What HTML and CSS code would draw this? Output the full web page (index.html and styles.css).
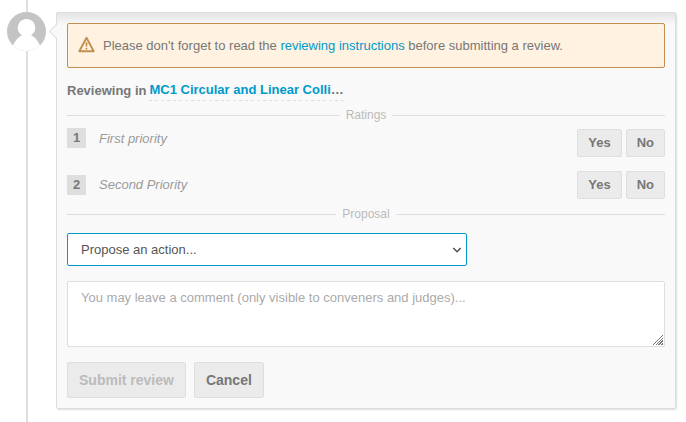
FILE: index.html
```html
<!DOCTYPE html>
<html lang="en">
<head>
<meta charset="utf-8">
<title>Review</title>
<link rel="stylesheet" href="styles.css">
</head>
<body>
<main class="timeline">
  <div class="avatar">
    <svg viewBox="0 0 39 39" aria-hidden="true">
      <defs><clipPath id="disc"><circle cx="19.5" cy="19.5" r="19.5"/></clipPath></defs>
      <g clip-path="url(#disc)">
        <rect width="39" height="39" fill="#c4c4c4"/>
        <path d="M4 39 L6 33.500 C8.500 28 11.500 24.500 15 23.200 C12.200 21.600 10.800 19.200 10.800 16 C10.800 10.800 14.500 7 19.500 7 C24.500 7 28.200 10.800 28.200 16 C28.200 19.200 26.800 21.600 24 23.200 C27.500 24.500 30.500 28 33 33.500 L35 39 Z" fill="#fff"/>
      </g>
    </svg>
  </div>
  <form class="panel">
    <div class="warning">
      <svg class="warning-icon" viewBox="0 0 17 17" aria-hidden="true">
        <path d="M8.500 1.800 L15.700 15.200 H1.300 Z" fill="none" stroke="#c28f50" stroke-width="1.900" stroke-linejoin="round"/>
        <path d="M8.500 6.300 V10.600 M8.500 11.800 V13.400" stroke="#c28f50" stroke-width="1.700"/>
      </svg>
      <p>Please don't forget to read the <a href="#instructions">reviewing instructions</a> before submitting a review.</p>
    </div>
    <div class="track"><span class="track-label">Reviewing in</span> <span class="track-name"><a href="#track">MC1 Circular and Linear Colli</a>…</span></div>
    <div class="titled-rule">Ratings</div>
    <div class="ratings">
      <div class="rating rating-first">
        <span class="number">1</span><span class="question">First priority</span>
        <div class="answers"><button type="button">Yes</button><button type="button">No</button></div>
      </div>
      <div class="rating">
        <span class="number">2</span><span class="question">Second Priority</span>
        <div class="answers"><button type="button">Yes</button><button type="button">No</button></div>
      </div>
    </div>
    <div class="titled-rule">Proposal</div>
    <div class="select-box">
      <select aria-label="Proposed action"><option>Propose an action...</option></select>
      <svg viewBox="0 0 10 6" aria-hidden="true"><path d="M1.300 1 L5 4.700 L8.700 1" fill="none" stroke="#555" stroke-width="1.600"/></svg>
    </div>
    <textarea aria-label="Comment" placeholder="You may leave a comment (only visible to conveners and judges)..."></textarea>
    <div class="actions">
      <button type="submit" disabled>Submit review</button>
      <button type="button">Cancel</button>
    </div>
  </form>
</main>
</body>
</html>
```
FILE: styles.css
```css
* { box-sizing: border-box; }

body {
  margin: 0;
  background: #fff;
  color: #777;
  font: 13px/20px "Liberation Sans", Arial, sans-serif;
}

a { color: #0099cc; text-decoration: none; }

p { margin: 0; }

.timeline {
  display: flex;
  align-items: flex-start;
  gap: 10px;
  min-height: 100vh;
  padding: 12px 10px 12px 7px;
  background: linear-gradient(#dedede, #dedede) 26px 0 / 2px 100% no-repeat;
}

.avatar {
  flex: none;
  width: 39px;
  height: 39px;
  background: #fff;
}

.avatar svg { display: block; }

.panel {
  position: relative;
  flex: 1;
  min-width: 0;
  padding: 10px;
  border: 1px solid #dcdcdc;
  border-radius: 2px;
  background: linear-gradient(#e4e4e4, #f9f9f9 12px);
  box-shadow: 1px 1px 2px #ddd;
}

.panel::before {
  content: "";
  position: absolute;
  top: 13px;
  left: -6px;
  width: 10px;
  height: 10px;
  border: solid #dedede;
  border-width: 0 0 1px 1px;
  background: linear-gradient(45deg, #f8f8f8 50%, transparent 50%);
  transform: rotate(45deg);
}

.warning {
  position: relative;
  display: flex;
  align-items: center;
  gap: 8px;
  padding: 12px 10px 11px;
  border: 1px solid #c28f50;
  border-radius: 2px;
  background: #fff2e0;
}

.warning-icon {
  flex: none;
  width: 17px;
  height: 17px;
  margin-top: -3px;
}

.track {
  display: flex;
  gap: 3px;
  margin: 12px 0 7px;
  font-weight: bold;
}

.track-label { padding-top: 1px; }

.track-name {
  padding-bottom: 1px;
  background: repeating-linear-gradient(90deg, #dedede 0 3px, transparent 3px 6px) bottom / 100% 1px no-repeat;
}

.titled-rule {
  display: flex;
  align-items: center;
  gap: 6px;
  color: #bbb;
  font-size: 12px;
  line-height: 14px;
}

.titled-rule::before,
.titled-rule::after {
  content: "";
  flex: 1;
  height: 1px;
  background: #dedede;
}

.ratings {
  display: grid;
  gap: 14px;
  padding: 6px 0 8px;
}

.rating {
  display: flex;
  align-items: center;
}

.rating-first { align-items: flex-start; }

.rating-first .answers { margin-top: 1px; }

.number {
  width: 19px;
  background: #dedede;
  font-weight: bold;
  text-align: center;
}

.question {
  flex: 1;
  padding-left: 13px;
  color: #999;
  font-style: italic;
  line-height: 22px;
}

.answers {
  display: flex;
  gap: 4px;
}

button {
  padding: 0 10px;
  border: 1px solid #dedede;
  border-radius: 2px;
  background: #ebebeb;
  color: #777;
  font: bold 13px/26px "Liberation Sans", Arial, sans-serif;
}

.select-box {
  position: relative;
  max-width: 400px;
  margin: 12px 0 15px;
}

.select-box svg {
  position: absolute;
  top: 14px;
  right: 5px;
  width: 10px;
  height: 6px;
  pointer-events: none;
}

select,
textarea {
  display: block;
  width: 100%;
  padding: 6px 13px;
  border: 1px solid #dedede;
  border-radius: 2px;
  background: #fff;
  color: #555;
  font: 13px/20px "Liberation Sans", Arial, sans-serif;
}

select {
  height: 33px;
  border-color: #0099cc;
  appearance: none;
}

textarea {
  height: 66px;
  resize: vertical;
}

textarea::-webkit-resizer {
  background:
    linear-gradient(135deg, #fff 50%, transparent 50%) 3px 3px / 11px 11px no-repeat,
    repeating-linear-gradient(135deg, #777 0 1px, #fff 1px 2px) 3px 3px / 11px 11px no-repeat;
}

textarea::placeholder { color: #aaa; }

.actions {
  display: flex;
  gap: 8px;
  margin-top: 15px;
}

.actions button {
  padding: 0 11px;
  font-size: 14px;
  line-height: 34px;
}

button:disabled { color: #bbb; }
```
